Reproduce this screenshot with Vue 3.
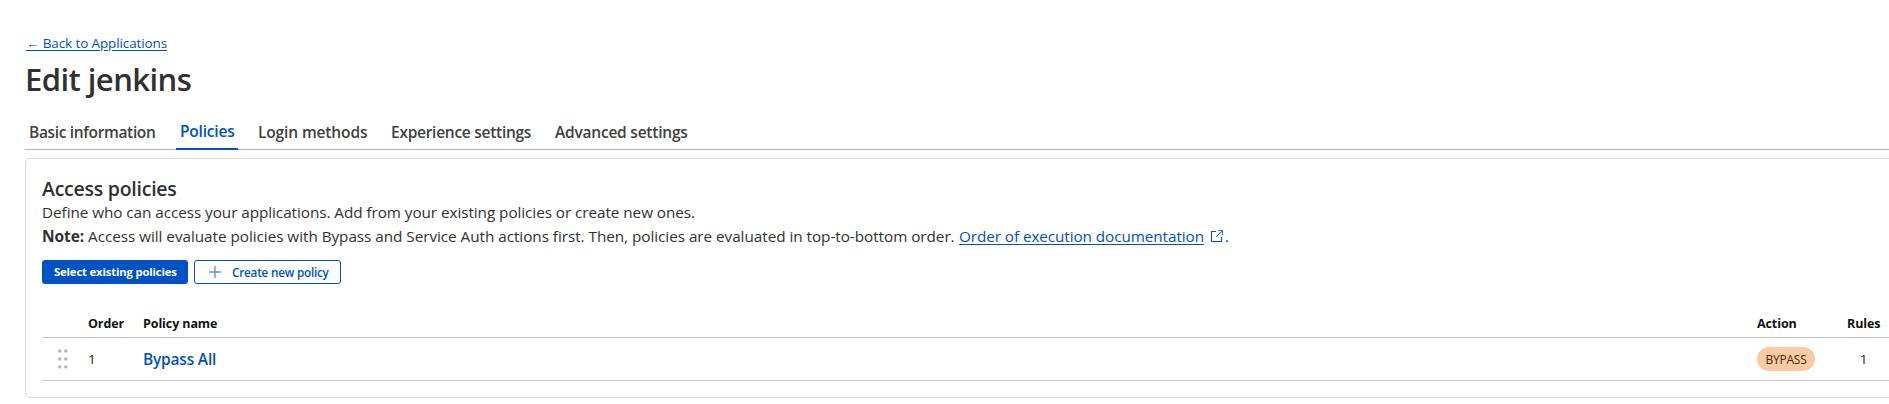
<script setup>
const tabs = [
  { label: 'Basic information', cls: 'basic' },
  { label: 'Policies', cls: 'active' },
  { label: 'Login methods', cls: 'login' },
  { label: 'Experience settings', cls: 'experience' },
  { label: 'Advanced settings', cls: 'advanced' }
]
const policies = [{ order: 1, name: 'Bypass All', action: 'BYPASS', rules: 1 }]
const dots = [[1.8, 2], [7.8, 2], [1.8, 10], [7.8, 10], [1.8, 18], [7.8, 18]]
</script>

<template>
  <div class="viewport">
    <main class="page">
      <a class="back">← Back to Applications</a>
      <h1>Edit jenkins</h1>
      <nav class="tabs">
        <a v-for="t in tabs" :key="t.label" class="tab" :class="t.cls">{{ t.label }}</a>
      </nav>
      <section class="card">
        <h2>Access policies</h2>
        <p class="define">Define who can access your applications. Add from your existing policies or create new ones.</p>
        <p class="note">
          <strong>Note:</strong>
          <span class="note-text">Access will evaluate policies with Bypass and Service Auth actions first. Then, policies are evaluated in top-to-bottom order.</span>
          <a class="doc">Order of execution documentation</a>
          <svg class="ext" width="14" height="14" viewBox="0 0 14 14" fill="none" stroke="#0051c3" stroke-width="1.1">
            <path d="M6 2.5H1.5V12.5H11.5V8" />
            <path d="M8 1.5H12.5V6M12.2 1.8L6.2 7.8" stroke-opacity=".8" />
          </svg>
          <span>.</span>
        </p>
        <div class="buttons">
          <button class="btn primary">Select existing policies</button>
          <button class="btn secondary">
            <svg width="12" height="12" viewBox="0 0 12 12" stroke="#0051c3" stroke-opacity=".62" stroke-width="1.4"><path d="M6 0V12M0 6H12" /></svg>
            <span>Create new policy</span>
          </button>
        </div>
        <div class="table">
          <div class="row head">
            <span></span><span>Order</span><span>Policy name</span><span>Action</span><span class="rules">Rules</span>
          </div>
          <div v-for="p in policies" :key="p.order" class="row">
            <svg class="grip" width="10" height="20" viewBox="0 0 10 20" fill="#b9b9b9">
              <circle v-for="(d, i) in dots" :key="i" :cx="d[0]" :cy="d[1]" r="1.8" />
            </svg>
            <span class="num">{{ p.order }}</span>
            <a class="name">{{ p.name }}</a>
            <span class="badge">{{ p.action }}</span>
            <span class="num rules">{{ p.rules }}</span>
          </div>
        </div>
      </section>
    </main>
  </div>
</template>

<style scoped>
.viewport {
  height: 404px;
  overflow: hidden;
  background: #fff;
  font-family: "Open Sans", "Noto Sans", sans-serif;
  font-size: 15.3px;
  color: #313131;
}
.page {
  box-sizing: border-box;
  width: 1940px;
  padding: 33px 0 0 25px;
  white-space: nowrap;
}
h1, h2, p { margin: 0; }
.back {
  display: block;
  width: max-content;
  margin-left: 1px;
  font-size: 13.5px;
  line-height: 20px;
  letter-spacing: -0.12px;
  color: #0051c3;
  text-decoration: underline;
  text-underline-offset: 2px;
}
h1 {
  margin-top: 6px;
  font-size: 31px;
  line-height: 40px;
  font-weight: 600;
  letter-spacing: -0.56px;
}
.tabs {
  display: flex;
  box-sizing: border-box;
  height: 30px;
  margin-top: 21px;
  padding-left: 4px;
  border-bottom: 1px solid #b3b3b3;
}
.tab {
  box-sizing: border-box;
  line-height: 25px;
  font-size: 15.5px;
  font-weight: 600;
  color: #404040;
}
.basic { width: 147px; letter-spacing: -0.34px; }
.active {
  width: 62px;
  height: 30px;
  margin-right: 20px;
  padding-left: 4px;
  line-height: 23px;
  color: #0051c3;
  border-bottom: 2px solid #0051c3;
  letter-spacing: -0.2px;
}
.login { width: 133px; letter-spacing: -0.13px; }
.experience { width: 164px; letter-spacing: -0.27px; }
.advanced { letter-spacing: -0.22px; }
.card {
  box-sizing: border-box;
  height: 240px;
  margin-top: 8px;
  padding: 18px 16px 0;
  border: 1px solid #d9d9d9;
  border-radius: 5px;
}
h2 {
  font-size: 19.5px;
  line-height: 24px;
  font-weight: 600;
  letter-spacing: -0.25px;
}
.define { margin-top: -1px; line-height: 24px; letter-spacing: -0.065px; }
.note { display: flex; line-height: 24px; }
.note strong { width: 46px; font-size: 15.5px; letter-spacing: -0.1px; }
.note-text { width: 871px; letter-spacing: -0.045px; }
.doc {
  letter-spacing: -0.085px;
  color: #0051c3;
  text-decoration: underline;
  text-underline-offset: 2px;
}
.ext { margin: 5px 1px 0 6px; }
.buttons { display: flex; gap: 6px; margin-top: 12px; }
.btn {
  box-sizing: border-box;
  display: flex;
  align-items: center;
  height: 24px;
  padding: 0 11px;
  border: 1px solid #0051c3;
  border-radius: 3px;
  font-family: inherit;
  line-height: 20px;
}
.primary {
  width: 146px;
  background: #0051c3;
  color: #fff;
  font-size: 11.3px;
  font-weight: 700;
  letter-spacing: -0.16px;
}
.secondary {
  width: 147px;
  gap: 11px;
  padding-left: 14px;
  background: #fff;
  color: #0051c3;
  font-size: 11.7px;
  font-weight: 600;
  letter-spacing: -0.2px;
}
.table { margin-top: 25px; }
.row {
  display: grid;
  grid-template-columns: 46px 55px 1614px 90px 33px;
  align-items: center;
  box-sizing: border-box;
  height: 43px;
  border-bottom: 1px solid #c6c6c6;
}
.head {
  height: 29px;
  padding-top: 1px;
  font-size: 12.5px;
  line-height: 20px;
  font-weight: 700;
  letter-spacing: -0.1px;
  color: #111;
}
.grip { margin-left: 16px; margin-top: -1px; }
.num { font-size: 13.5px; line-height: 20px; color: #222; }
.rules { text-align: center; }
.name {
  font-size: 15.5px;
  line-height: 24px;
  font-weight: 600;
  color: #0051c3;
  letter-spacing: -0.2px;
}
.badge {
  width: 58px;
  height: 24px;
  border-radius: 12px;
  background: #f9cba3;
  color: #4d2706;
  font-size: 12px;
  line-height: 25px;
  letter-spacing: -0.25px;
  text-align: center;
}
</style>

<style>
body { background: #fff; overflow: hidden; }
</style>
